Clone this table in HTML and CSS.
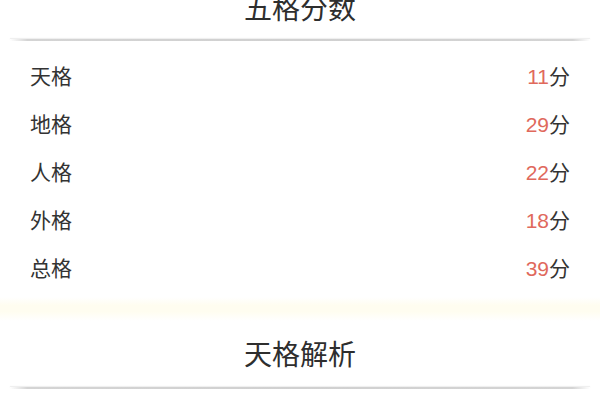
FILE: index.html
```html
<!DOCTYPE html>
<html lang="zh">
<head>
<meta charset="utf-8">
<link rel="stylesheet" href="styles.css">
</head>
<body>
<div class="page">
  <section class="panel first">
    <h2 class="title">五格分数</h2>
    <div class="divider"></div>
    <ul class="rows">
      <li class="row"><span class="label">天格</span><span class="value"><em>11</em>分</span></li>
      <li class="row"><span class="label">地格</span><span class="value"><em>29</em>分</span></li>
      <li class="row"><span class="label">人格</span><span class="value"><em>22</em>分</span></li>
      <li class="row"><span class="label">外格</span><span class="value"><em>18</em>分</span></li>
      <li class="row"><span class="label">总格</span><span class="value"><em>39</em>分</span></li>
    </ul>
  </section>
  <div class="band"></div>
  <section class="panel">
    <h2 class="title">天格解析</h2>
    <div class="divider"></div>
  </section>
</div>
</body>
</html>
```

FILE: styles.css
```css
html, body {
  margin: 0;
  padding: 0;
  background: #ffffff;
  overflow: hidden;
}
body {
  font-family: "Noto Sans CJK SC", "Noto Sans", sans-serif;
  color: #333333;
}
.page {
  width: 600px;
  height: 400px;
  overflow: hidden;
}
.panel {
  display: flex;
  flex-direction: column;
}
.panel.first {
  margin-top: -13px;
}
.title {
  margin: 0;
  font-size: 28px;
  font-weight: 400;
  line-height: 40px;
  text-align: center;
  color: #2e2e2e;
}
.divider {
  margin: 12px 10px 0;
  height: 2px;
  background: linear-gradient(to right, rgba(200,200,200,0) 0%, #d4d4d4 3%, #d0d0d0 50%, #d4d4d4 97%, rgba(200,200,200,0) 100%);
  box-shadow: 0 -1px 1px rgba(220,220,220,0.5);
}
.rows {
  list-style: none;
  margin: 0;
  padding: 10px 30px 0 30px;
}
.row {
  display: flex;
  justify-content: space-between;
  align-items: center;
  height: 48px;
  font-size: 21px;
}
.label {
  color: #333333;
}
.value {
  color: #333333;
}
.value em {
  font-style: normal;
  color: #e0695c;
  font-family: "Liberation Sans", "Noto Sans CJK SC", sans-serif;
}
.band {
  margin-top: 6px;
  height: 24px;
  background: linear-gradient(to bottom, #ffffff 0%, #fffdf0 35%, #fffdf0 60%, #ffffff 100%);
}
.panel:last-child {
  margin-top: 12px;
}
.panel:last-child .divider {
  margin-top: 14px;
}
```
